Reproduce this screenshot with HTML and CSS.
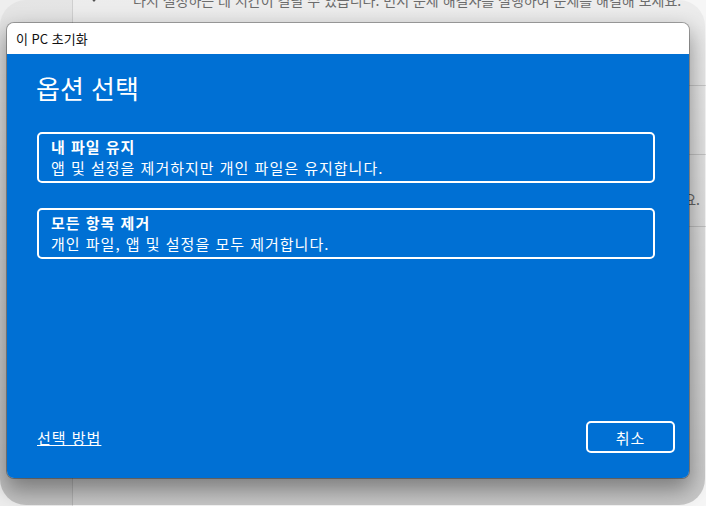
FILE: index.html
```html
<!DOCTYPE html>
<html lang="ko">
<head>
    <meta charset="UTF-8">
    <meta name="viewport" content="width=device-width, initial-scale=1.0">
    <title>이 PC 초기화</title>
    <link rel="stylesheet" href="styles.css">
</head>
<body>
    <!-- 뒤에 있는 설정 창 -->
    <div class="settings">
        <div class="nav"></div>
        <div class="content">
            <div class="row row-top">
                <svg class="row-icon" width="14" height="14" viewBox="0 0 14 14">
                    <path d="M2 3 L6 8 L12 1" fill="none" stroke="#555" stroke-width="1.4"/>
                </svg>
                <span class="row-text">다시 설정하는 데 시간이 걸릴 수 있습니다. 먼저 문제 해결사를 실행하여 문제를 해결해 보세요.</span>
            </div>
            <div class="row row-mid"></div>
            <div class="row row-end">
                <span class="row-text">문제 해결사를 실행하여 문제를 해결해 보세요.</span>
            </div>
            <div class="row row-last"></div>
        </div>
    </div>

    <!-- 대화 상자 그림자 -->
    <div class="dialog-shadow"></div>

    <!-- 초기화 대화 상자 -->
    <div class="dialog">
        <div class="dialog-title">이 PC 초기화</div>
        <div class="dialog-body">
            <h1>옵션 선택</h1>

            <div class="option">
                <div class="option-title">내 파일 유지</div>
                <div class="option-desc">앱 및 설정을 제거하지만 개인 파일은 유지합니다.</div>
            </div>

            <div class="option">
                <div class="option-title">모든 항목 제거</div>
                <div class="option-desc">개인 파일, 앱 및 설정을 모두 제거합니다.</div>
            </div>

            <div class="dialog-footer">
                <a href="#" class="help-link">선택 방법</a>
                <button type="button">취소</button>
            </div>
        </div>
    </div>
</body>
</html>
```

FILE: styles.css
```css
body {
    margin: 0;
    width: 706px;
    height: 506px;
    overflow: hidden;
    background-color: #f8f8f8;
    font-family: "Noto Sans CJK KR", "Noto Sans", sans-serif;
    position: relative;
}
.settings {
    display: flex;
    height: 100%;
}
.nav {
    width: 72px;
    background-color: #eeeeee;
    border-right: 1px solid #d8d8d8;
}
.content {
    flex: 1;
    display: flex;
    flex-direction: column;
    background-color: #f6f6f6;
}
.row {
    display: flex;
    align-items: center;
    border-bottom: 1px solid #d4d4d4;
    color: #707070;
    font-size: 14px;
    box-sizing: border-box;
}
.row-top {
    height: 129px;
    margin-top: -43px;
    padding-left: 15px;
    padding-top: 33px;
    align-items: flex-start;
}
.row-icon {
    margin-right: 31px;
    margin-top: 3px;
}
.row-mid {
    height: 69px;
}
.row-end {
    height: 72px;
    justify-content: flex-end;
    padding-right: 6px;
    padding-top: 17px;
}
.row-last {
    flex: 1;
    border-bottom: none;
}

.dialog-shadow {
    position: absolute;
    left: 0;
    top: 0;
    width: 705px;
    height: 505px;
    border-radius: 26px;
    background: linear-gradient(to bottom, rgba(0, 0, 0, 0.04), rgba(0, 0, 0, 0.19));
}
.dialog {
    position: absolute;
    left: 7px;
    top: 23px;
    width: 682px;
    height: 455px;
    display: flex;
    flex-direction: column;
    border-radius: 7px;
    box-shadow: 0 10px 22px 2px rgba(0, 0, 0, 0.38), 0 0 0 1px rgba(0, 0, 0, 0.3);
    overflow: hidden;
}
.dialog-title {
    height: 31px;
    line-height: 31px;
    padding-left: 9px;
    background-color: #fff;
    color: #111;
    font-size: 13px;
}
.dialog-body {
    flex: 1;
    display: flex;
    flex-direction: column;
    background-color: #0070d4;
    color: #fff;
    padding: 17px 14px 25px 30px;
}
h1 {
    margin: 0 0 27px -1px;
    font-size: 26px;
    font-weight: normal;
    line-height: 34px;
}
.option {
    border: 2px solid #fff;
    border-radius: 5px;
    padding: 3px 12px;
    margin: 0 20px 25px 0;
    letter-spacing: 1px;
}
.option-title {
    font-size: 15px;
    font-weight: bold;
    line-height: 20px;
}
.option-desc {
    font-size: 15px;
    line-height: 21px;
}
.dialog-footer {
    margin-top: auto;
    display: flex;
    justify-content: space-between;
    align-items: center;
}
.help-link {
    color: #fff;
    font-size: 15px;
    letter-spacing: 1px;
}
button {
    width: 89px;
    height: 32px;
    background-color: transparent;
    color: #fff;
    border: 2px solid #fff;
    border-radius: 5px;
    font-family: inherit;
    font-size: 15px;
    letter-spacing: 1px;
    cursor: pointer;
}
```
